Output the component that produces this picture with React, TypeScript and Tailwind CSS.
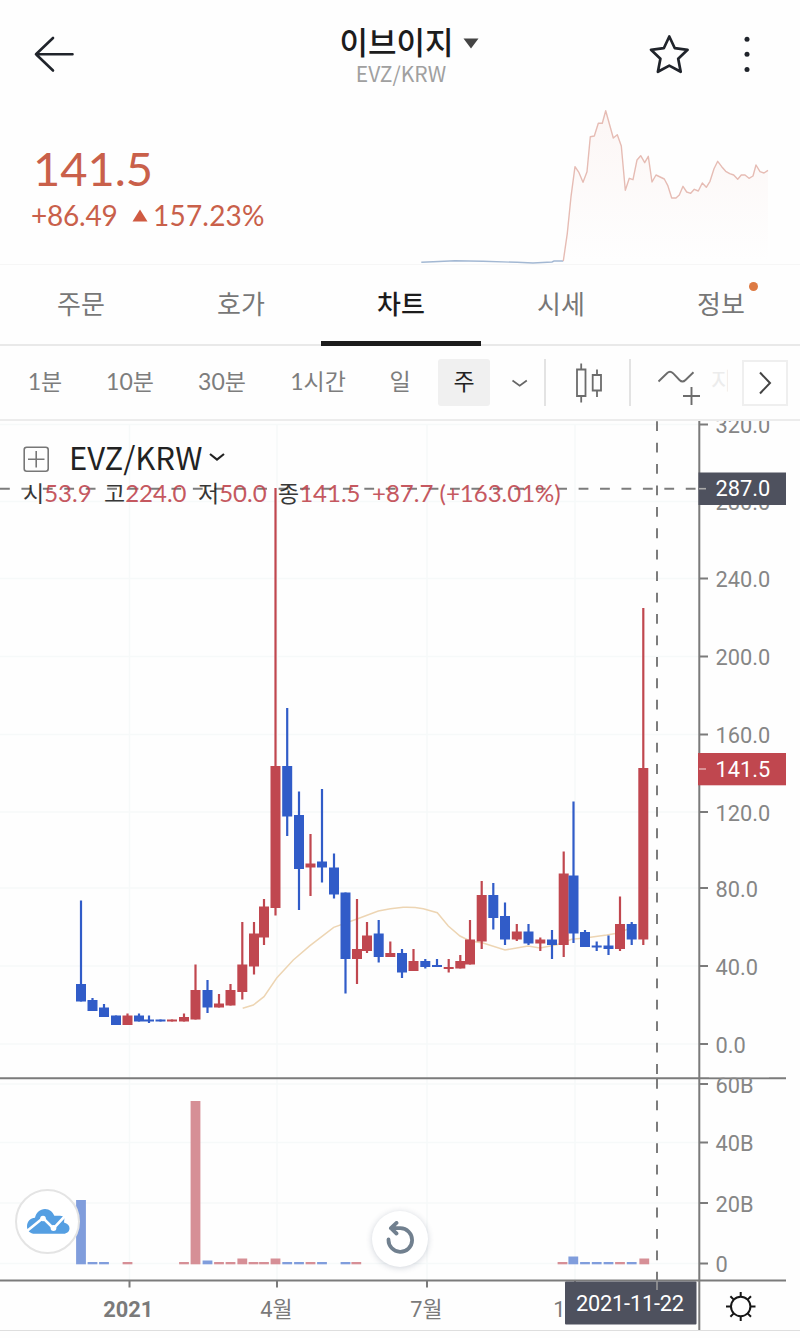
import React from 'react';

type Side = 'up' | 'down';

// [center x, high, body top, body bottom, low, side]
type Candle = [number, number, number, number, number, Side];

const candles: Candle[] = [
  [81, 900.5, 984, 1001.5, 1001.5, 'down'],
  [92.5, 998, 1000, 1011, 1011, 'down'],
  [104, 1004, 1007.5, 1017, 1017, 'down'],
  [116, 1015.5, 1015.5, 1025, 1025, 'down'],
  [127.5, 1013.5, 1015.5, 1025, 1025, 'up'],
  [139, 1013.5, 1015.5, 1021.5, 1021.5, 'down'],
  [149, 1015.5, 1019.5, 1021.5, 1023, 'down'],
  [160.5, 1019.5, 1019.5, 1021.5, 1021.5, 'down'],
  [172, 1019.5, 1019.5, 1021.5, 1021.5, 'up'],
  [184, 1013.5, 1017, 1021.5, 1021.5, 'up'],
  [195.5, 964.5, 990, 1019.5, 1019.5, 'up'],
  [207.5, 980, 990, 1007.5, 1013, 'down'],
  [219, 994, 1003.5, 1007.5, 1007.5, 'up'],
  [230.5, 984, 990, 1005.5, 1005.5, 'up'],
  [242.3, 922, 964.5, 992, 999.5, 'up'],
  [254, 922, 933.5, 966.5, 974.5, 'up'],
  [264, 899, 906.5, 937.5, 945, 'up'],
  [275.5, 488, 766, 908, 915.5, 'up'],
  [287.2, 708, 766, 816.5, 836, 'down'],
  [299, 791.5, 815, 869, 910, 'down'],
  [310.5, 834, 863.5, 867.5, 896, 'up'],
  [322, 789, 861.5, 867.5, 882.5, 'down'],
  [334, 853.5, 867.5, 894.5, 898.5, 'down'],
  [345.5, 892.5, 892.5, 959, 993.5, 'down'],
  [357, 899, 949, 959, 984, 'up'],
  [367, 922, 935.5, 951, 953, 'up'],
  [378.7, 920, 933.5, 957, 962.5, 'down'],
  [390.3, 941.5, 953, 957, 957, 'up'],
  [402, 949, 953, 972.5, 978, 'down'],
  [413.5, 949, 961, 971, 971, 'up'],
  [425.3, 959, 961, 967, 968.5, 'down'],
  [437, 959, 965, 967, 967, 'down'],
  [448.7, 959, 967, 969, 972.5, 'up'],
  [460.3, 955, 961, 968.5, 968.5, 'up'],
  [470, 920, 939.5, 964.5, 964.5, 'up'],
  [481.7, 881, 895, 941.5, 949, 'up'],
  [493.3, 883, 895, 918, 929.5, 'down'],
  [505, 902.5, 916, 939.5, 945, 'down'],
  [516.8, 924, 931.5, 939.5, 941, 'up'],
  [528.5, 924, 931.5, 943.5, 945, 'down'],
  [540.3, 937.5, 939.5, 943.5, 951, 'up'],
  [552, 930, 939.5, 945, 959, 'down'],
  [563.7, 851.5, 873.5, 945, 957, 'up'],
  [573.5, 801.5, 875.5, 933.5, 943, 'down'],
  [585, 930, 932, 947, 947, 'down'],
  [596.7, 941.5, 945.5, 947.5, 951, 'down'],
  [608.5, 935.5, 945.5, 949, 955, 'down'],
  [620, 896.5, 924, 949, 951, 'up'],
  [631.7, 922, 924, 939.5, 945, 'down'],
  [643.3, 608, 768, 939.5, 945, 'up'],
];

// [center x, top, side]
const volumes: [number, number, Side][] = [
  [81, 1200, 'down'],
  [92.5, 1262, 'down'],
  [104, 1262, 'down'],
  [127.5, 1262, 'up'],
  [184, 1262, 'up'],
  [195.5, 1101, 'up'],
  [207.5, 1260.5, 'down'],
  [219, 1262, 'up'],
  [230.5, 1262, 'up'],
  [242.3, 1258.5, 'up'],
  [253.5, 1262, 'up'],
  [264, 1262, 'up'],
  [275.5, 1258.5, 'up'],
  [287.2, 1262, 'down'],
  [299, 1262, 'down'],
  [310.5, 1262, 'up'],
  [322, 1262, 'down'],
  [345.5, 1262, 'down'],
  [356.3, 1262, 'up'],
  [562.5, 1262, 'up'],
  [573.3, 1256.5, 'down'],
  [585, 1262, 'down'],
  [596.7, 1262, 'down'],
  [608.5, 1262, 'down'],
  [620, 1262, 'up'],
  [631.7, 1262, 'down'],
  [644.3, 1258.5, 'up'],
];

const priceTicks = [
  { y: 424.5, label: '320.0' },
  { y: 501.5, label: '280.0' },
  { y: 578.5, label: '240.0' },
  { y: 656.5, label: '200.0' },
  { y: 734.5, label: '160.0' },
  { y: 812, label: '120.0' },
  { y: 888, label: '80.0' },
  { y: 966, label: '40.0' },
  { y: 1044, label: '0.0' },
];

const volumeTicks = [
  { y: 1084, label: '60B' },
  { y: 1142.5, label: '40B' },
  { y: 1203, label: '20B' },
  { y: 1263.5, label: '0' },
];

const months = [129.5, 277, 427, 575];

const maLine =
  'M242.7 1008.3L253.3 1005L264 996.7L276.7 978L293.3 960L310 945.7L333.7 927.3L357 919L378.3 911Q390 908.5 403.3 907.3Q414 907 423.3 908.7L437.3 912.7L448.3 926L460 936L470 941L483 943L505 950L528 946L540 948L556.7 944.7L571.7 939.3L585 938L606.7 935L620 932.7L636 925';

const sparkPoints =
  '163.3,261 167.3,233.3 171,196.7 175,166.7 179,172.7 183,182.3 187,171.7 190.3,136.7 194.3,136 198.3,123.3 202.3,123.3 205.7,110.7 213.3,138 217.3,134.7 221.3,146 225.3,190.3 229.3,178.3 233,179.7 237,160 240.7,155.7 244.7,162.7 248.3,156.3 252,182 256,175 264.3,179 267.7,185.3 271.7,198 276,198 279.3,195 283,186.3 286.7,192 290.7,193.3 294.3,189.3 298.3,191 302.3,183 306.3,187.3 310,181.3 314,168.7 317.7,161.3 321.7,166.7 325.7,171.3 329.7,173.7 333.7,175 337.7,179.3 341.3,175 345,175 349,178.3 353,176 356,165 360,171.7 364,173 368,170.3';

const Header: React.FC = () => (
  <header className="flex h-[104px] items-start">
    <div className="w-[311px] pt-[36px] pl-[34px]">
      <button className="block" aria-label="뒤로">
        <svg width="42" height="38" viewBox="0 0 42 38" fill="none" stroke="#20242b" strokeWidth="2.6" strokeLinecap="round" strokeLinejoin="round">
          <path d="M19 2L2 18.3L19 34.5M2 18.3H38.5" />
        </svg>
      </button>
    </div>
    <div className="flex w-[180px] flex-col items-center pt-[25px]">
      <div className="flex h-[32px] items-center gap-[9px] pl-[16px]">
        <h1 className="text-[31px] leading-[32px] font-medium whitespace-nowrap text-[#1c1c1c]">이브이지</h1>
        <svg width="16" height="11" viewBox="0 0 16 11" className="mt-[5px]">
          <path d="M0.5 0.5H15.5L8 10.5Z" fill="#444" />
        </svg>
      </div>
      <span className="mt-[3px] text-[21px] leading-[26px] text-[#a0a0a0]">EVZ/KRW</span>
    </div>
    <div className="flex pt-[32px] pl-[156px]">
      <svg width="44" height="44" viewBox="0 0 44 44" fill="none" stroke="#20242b" strokeWidth="2.7" strokeLinejoin="round">
        <path d="M22.3 4.5L27.8 16.2L40.6 17.8L31.2 26.8L33.7 39.8L22.3 33.6L10.9 39.8L13.4 26.8L4 17.8L16.8 16.2Z" />
      </svg>
      <svg width="14" height="44" viewBox="0 0 14 44" fill="#20242b" className="ml-[49px]">
        <circle cx="7" cy="7.3" r="2.5" />
        <circle cx="7" cy="22.3" r="2.5" />
        <circle cx="7" cy="37.5" r="2.5" />
      </svg>
    </div>
  </header>
);

const Summary: React.FC = () => (
  <section className="flex h-[161px] justify-between border-b border-[#f6f6f6] font-['Lato','Noto_Sans_CJK_KR',sans-serif] text-[#c9604a]">
    <div className="pt-[36px] pl-[33px]">
      <p className="text-[47px] leading-[56px]">141.5</p>
      <div className="-ml-[2px] flex h-[38px] items-center text-[28px]">
        <span className="w-[87px] tracking-[-0.2px]">+86.49</span>
        <svg width="16" height="13" viewBox="0 0 16 13" className="mr-[5px] ml-[14px]">
          <path d="M8 0.5L15.5 12.5H0.5Z" fill="#cf5a42" />
        </svg>
        <span className="tracking-[0.2px]">157.23%</span>
      </div>
    </div>
    <svg width="400" height="160" viewBox="0 104 400 160" fill="none">
      <defs>
        <linearGradient id="spark" x1="0" y1="110" x2="0" y2="262" gradientUnits="userSpaceOnUse">
          <stop offset="0" stopColor="#fcf6f5" />
          <stop offset="1" stopColor="#fefefe" />
        </linearGradient>
      </defs>
      <polygon points={`${sparkPoints} 368,262 163.3,262`} fill="url(#spark)" />
      <polyline points="21.3,262.3 33.3,261.7 55,260.7 83,261.3 117,262.3 133,263 152,262 154,261 163.3,261" stroke="#a3b8d3" strokeWidth="1.4" />
      <polyline points={sparkPoints} stroke="#e6bcb4" strokeWidth="1.4" strokeLinejoin="round" />
    </svg>
  </section>
);

const tabs = ['주문', '호가', '차트', '시세', '정보'];

const Tabs: React.FC = () => (
  <nav className="flex h-[81px] border-b-2 border-[#e9e9e9] pl-px text-[26px]">
    {tabs.map((tab) => (
      <button
        key={tab}
        className={
          tab === '차트'
            ? '-mb-[2px] w-[160px] shrink-0 border-b-[5px] border-[#1c1c1c] pb-[1px] font-medium text-[#1c1c1c]'
            : 'w-[160px] shrink-0 pb-[4px] text-[#777]'
        }
      >
        <span className="relative">
          {tab}
          {tab === '정보' && <i className="absolute -top-[2px] -right-[13px] size-[9px] rounded-full bg-[#dd7a43]" />}
        </span>
      </button>
    ))}
  </nav>
);

const Toolbar: React.FC = () => (
  <div className="flex h-[75px] items-center border-b-2 border-[#ececec] font-['Lato','Noto_Sans_CJK_KR',sans-serif] text-[23px] whitespace-nowrap text-[#7d7d7d]">
    <button className="w-[90px] pb-[2px]">1분</button>
    <button className="w-[80px] pb-[2px]">10분</button>
    <button className="w-[104px] pb-[2px]">30분</button>
    <button className="w-[88px] pb-[2px]">1시간</button>
    <button className="w-[76px] pb-[2px]">일</button>
    <button className="h-[47px] w-[52px] rounded-[3px] bg-[#f0f0f0] pb-[2px] text-[#222]">주</button>
    <svg width="54" height="20" viewBox="0 0 54 20" fill="none" stroke="#666" strokeWidth="1.7">
      <path d="M22.5 7.5L29.7 12.8L36.8 7.5" />
    </svg>
    <div className="h-[47px] w-[2px] bg-[#e3e3e3]" />
    <svg width="83" height="46" viewBox="0 0 83 46" fill="none" stroke="#6c6c6c" strokeWidth="1.8">
      <path d="M31 9.5H39.5V36H31ZM35.2 3.5V9.5M35.2 36V42.5M46.7 15H55V30.5H46.7ZM51 9.5V15M51 30.5V37" />
    </svg>
    <div className="h-[47px] w-[2px] bg-[#e3e3e3]" />
    <svg width="76" height="48" viewBox="0 0 76 48" fill="none" stroke="#6c6c6c" strokeWidth="1.9">
      <path d="M27.5 22.5L36 14.2Q39 11.5 42 14.2L48.5 21Q51.5 24 54.5 21L62.5 13.3" />
      <path d="M60.5 28V46M52 37H69" />
    </svg>
    <span className="ml-[4px] w-[31px] pb-[4px] text-[#ececec]">
      <span className="block w-[17px] overflow-hidden">지</span>
    </span>
    <button className="flex h-[46px] w-[46px] items-center justify-center border-2 border-[#efefef] bg-white" aria-label="다음">
      <svg width="14" height="24" viewBox="0 0 14 24" fill="none" stroke="#444" strokeWidth="2">
        <path d="M2 1.5L12 12L2 22.5" />
      </svg>
    </button>
  </div>
);

const ohlc = [
  { name: '시', value: '53.9', width: 'w-[81px]' },
  { name: '고', value: '224.0', width: 'w-[94px]' },
  { name: '저', value: '50.0', width: 'w-[80px]' },
  { name: '종', value: '141.5', width: 'w-[94px]' },
];

const ChartLegend: React.FC = () => (
  <div className="absolute top-[14px] left-[23px]">
    <div className="flex h-[44px] items-center text-[31px] leading-[40px] text-[#222]">
      <svg width="26" height="26" viewBox="0 0 26 26" fill="none" stroke="#777" strokeWidth="1.6" className="mt-[4px] mr-[20px]">
        <rect x="1.2" y="1.2" width="24" height="24" rx="2.5" />
        <path d="M13.2 5V21.5M5 13.2H21.5" />
      </svg>
      <span className="w-[133px] pb-[1px]">EVZ/KRW</span>
      <svg width="16" height="10" viewBox="0 0 16 10" fill="none" stroke="#222" strokeWidth="2.2" className="ml-[7px]">
        <path d="M1 2L8 7.5L15 2" />
      </svg>
    </div>
    <div className="-mt-[1px] flex h-[30px] items-center font-['Lato','Noto_Sans_CJK_KR',sans-serif] text-[24px] whitespace-nowrap text-[#c0474f] opacity-90">
      {ohlc.map(({ name, value, width }) => (
        <span key={name} className={width}>
          <span className="text-[23px] text-[#222]">{name}</span>
          {value}
        </span>
      ))}
      <span>+87.7 (+163.01%)</span>
    </div>
  </div>
);

const PriceChart: React.FC = () => (
  <svg
    width="800"
    height="909"
    viewBox="0 421 800 909"
    className="block font-['Roboto','Noto_Sans_CJK_KR',sans-serif] text-[21.8px]"
  >
    {/* grid */}
    <g stroke="#f6f9f9" strokeWidth="1.5">
      {[...priceTicks, ...volumeTicks].map(({ y }) => (
        <path key={y} d={`M0 ${y}H699`} />
      ))}
      {months.map((x) => (
        <path key={x} d={`M${x} 424V1280`} />
      ))}
    </g>

    {/* volume */}
    {volumes.map(([x, top, side]) => (
      <rect key={x} x={x - 4.9} y={top} width="9.8" height={1264.3 - top} fill={side === 'up' ? '#d68f96' : '#809ddc'} />
    ))}

    <path d={maLine} fill="none" stroke="#edd5b3" strokeWidth="1.5" />

    {/* candles */}
    {candles.map(([x, high, top, bottom, low, side]) => (
      <g key={x} fill={side === 'up' ? '#c0474f' : '#315cc8'}>
        <rect x={x - 1.1} y={high} width="2.2" height={low - high} />
        <rect x={x - 5} y={top} width="10" height={bottom - top} />
      </g>
    ))}

    {/* crosshair */}
    <g stroke="#7c7c7c" strokeWidth="2" strokeDasharray="9.8 11.63">
      <path d="M0 488.7H699" />
      <path d="M657 421.2V1078" />
      <path d="M657 1079V1280" />
    </g>

    {/* axes */}
    <g stroke="#7b7b7b" strokeWidth="2">
      <path d="M699.3 421V1330M0 1078.2H786M0 1280.5H786" />
      {[...priceTicks, ...volumeTicks].map(({ y }) => (
        <path key={y} d={`M699 ${y}H708`} />
      ))}
      {months.map((x) => (
        <path key={x} d={`M${x} 1281V1287.5`} />
      ))}
    </g>

    <g fill="#868686">
      {priceTicks.map(({ y, label }) => (
        <text key={label} x="715.5" y={y + 8.6}>{label}</text>
      ))}
      {volumeTicks.map(({ y, label }) => (
        <text key={label} x="715.5" y={y + 8.6}>{label}</text>
      ))}
    </g>
    {/* the top label of the volume pane is cut by the separator */}
    <rect x="709" y="1073" width="60" height="4.2" fill="#fefefe" />

    <g fill="#7a7a7a" textAnchor="middle">
      <text x="128.3" y="1316.5" className="font-bold">2021</text>
      <text x="276.5" y="1316.5">4월</text>
      <text x="426.5" y="1316.5">7월</text>
      <text x="575.5" y="1316.5">10월</text>
    </g>

    <g fill="#fff">
      <rect x="698.5" y="472.5" width="87.5" height="32.5" fill="#4e515e" />
      <path d="M699 488.7H706" stroke="#aaa" strokeWidth="1.6" />
      <text x="715.5" y="496">287.0</text>
      <rect x="698" y="753" width="88" height="32.3" fill="#c0474f" />
      <path d="M699 769H706" stroke="#e2a5a9" strokeWidth="1.6" />
      <text x="715.5" y="776.5">141.5</text>
      <rect x="565" y="1281.5" width="131.5" height="43" rx="1" fill="#4e515e" />
      <path d="M657 1281V1290" stroke="#999" strokeWidth="1.6" />
      <text x="576" y="1310.5" textLength="108">2021-11-22</text>
    </g>

    {/* settings */}
    <g fill="none" stroke="#161616" strokeWidth="2">
      <circle cx="740.7" cy="1306.5" r="9.7" />
      <path d="M740.7 1292V1297M740.7 1316V1321M726 1306.5H731M750.5 1306.5H755.5M730.4 1296.2L733.8 1299.6M747.6 1313.4L751 1316.8M730.4 1316.8L733.8 1313.4M747.6 1299.6L751 1296.2" />
    </g>
  </svg>
);

const App: React.FC = () => {
  return (
    <div className="h-[1338px] w-[800px] overflow-hidden bg-[#fefefe] font-['Noto_Sans_CJK_KR',sans-serif]">
      <Header />
      <Summary />
      <Tabs />
      <Toolbar />
      <main className="relative border-b border-[#dedede]">
        <PriceChart />
        <ChartLegend />
        <div className="absolute top-[768px] left-[15px] flex size-[65px] items-center justify-center rounded-full border-2 border-[#e4e4e4] bg-white">
          <svg width="44" height="27" viewBox="0 0 44 27" fill="none">
            <path d="M9 25.8C4 25.8 1 22.5 1 18.5C1 13.5 4.5 10 9 9.8C10 4.5 14 1 19 1C23.5 1 27 4 28.3 7.8H34C36 7.8 37.5 8.5 38.5 9.8L38 14.5C41.5 15.5 43.5 17.5 43.5 20.3C43.5 23.5 41 25.8 37.5 25.8Z" fill="#559fe2" />
            <path d="M1 23L17 10L27.5 20.5L40 7" stroke="#fff" strokeWidth="2.6" />
            <circle cx="17" cy="10.5" r="2.8" fill="#fff" />
            <circle cx="27.5" cy="20" r="2.9" fill="#fff" />
          </svg>
        </div>
        <button className="absolute top-[790px] left-[372px] flex size-[56px] items-center justify-center rounded-full bg-white shadow-[0_1px_6px_rgba(40,60,90,0.22)]" aria-label="초기화">
          <svg width="30" height="36" viewBox="0 0 30 36" fill="none" stroke="#71808f" strokeWidth="3.8" strokeLinecap="round" strokeLinejoin="round">
            <path d="M3.5 18.5A11.8 11.8 0 1 0 15.3 7.2H6M11.5 1.9L5.9 7.2L11.5 12.5" />
          </svg>
        </button>
      </main>
    </div>
  );
};

export default App;
